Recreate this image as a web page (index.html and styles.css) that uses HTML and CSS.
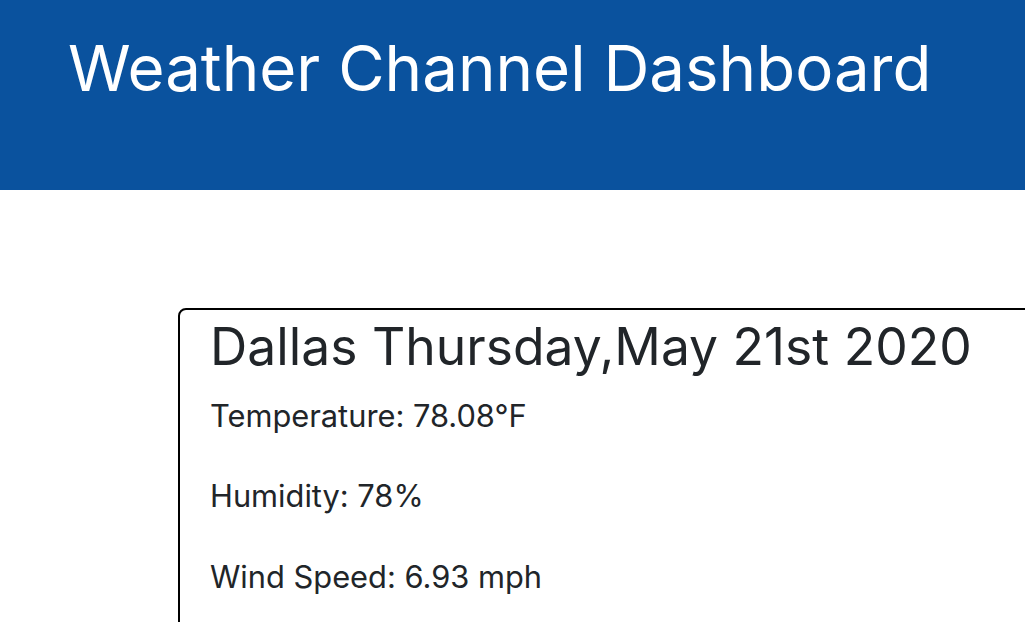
FILE: index.html
```html
<!DOCTYPE html>
<html lang="en">
<head>
<meta charset="utf-8">
<title>Weather Channel Dashboard</title>
<link rel="stylesheet" href="styles.css">
</head>
<body>
<header class="banner">
  <h1 class="banner-title">Weather Channel Dashboard</h1>
</header>
<main class="content">
  <section class="card">
    <h2 class="card-title">Dallas Thursday,May 21st 2020</h2>
    <p class="card-line">Temperature: 78.08°F</p>
    <p class="card-line">Humidity: 78%</p>
    <p class="card-line">Wind Speed: 6.93 mph</p>
  </section>
</main>
</body>
</html>
```
FILE: styles.css
```css
html, body {
  margin: 0;
  padding: 0;
  overflow: hidden;
  background: #ffffff;
}
body {
  font-family: Inter, "Liberation Sans", sans-serif;
  color: #212529;
}
.banner {
  background: #0a529e;
  height: 190px;
  box-sizing: border-box;
  padding: 30px 0 0 68px;
}
.banner-title {
  margin: 0;
  color: #ffffff;
  font-size: 63.6px;
  font-weight: 400;
  line-height: 1.2;
  white-space: nowrap;
}
.content {
  padding: 118px 0 0 178px;
}
.card {
  width: 900px;
  border: 2px solid #000000;
  border-radius: 8px;
  padding: 6px 0 0 30px;
  height: 400px;
  box-sizing: border-box;
}
.card-title {
  margin: 0 0 15px 0;
  font-size: 51.6px;
  font-weight: 400;
  line-height: 1.2;
  white-space: nowrap;
}
.card-line {
  margin: 0 0 34px 0;
  font-size: 30.8px;
  line-height: 46.5px;
  white-space: nowrap;
}
```
